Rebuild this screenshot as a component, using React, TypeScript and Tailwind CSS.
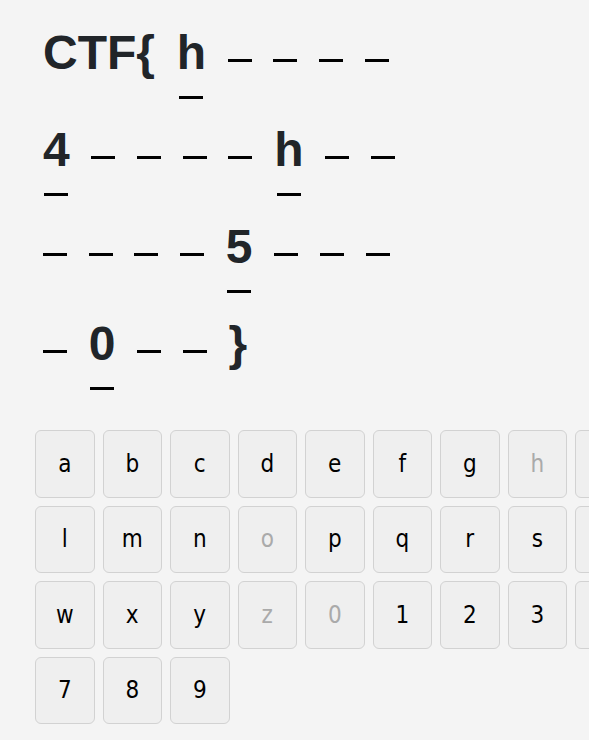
import React from "react";

type Slot = { t: "text"; v: string } | { t: "rev"; v: string } | { t: "blank" };

const T = (v: string): Slot => ({ t: "text", v });
const R = (v: string): Slot => ({ t: "rev", v });
const B: Slot = { t: "blank" };

const lines: Slot[][] = [
  [T("CTF{"), R("h"), B, B, B, B],
  [R("4"), B, B, B, B, R("h"), B, B],
  [B, B, B, B, R("5"), B, B, B],
  [B, R("0"), B, B, T("}")],
];

const keys = "abcdefghijklmnopqrstuvwxyz0123456789".split("");
const used = new Set(["h", "o", "z", "0", "4", "5"]);

function SlotView({ s }: { s: Slot }) {
  if (s.t === "blank") {
    return (
      <div className="w-[24px] shrink-0">
        <div className="mt-[34px] h-[3px] w-[24px] bg-black" />
      </div>
    );
  }
  if (s.t === "text") {
    return (
      <div className="shrink-0 text-[48px] leading-[56px] font-bold text-[#212529]">{s.v}</div>
    );
  }
  return (
    <div className="flex shrink-0 flex-col items-center">
      <div className="text-[48px] leading-[56px] font-bold text-[#212529]">{s.v}</div>
      <div className="mt-[14.5px] h-[3px] w-[24px] bg-black" />
    </div>
  );
}

export default function App() {
  return (
    <div
      className="min-h-screen w-full overflow-hidden bg-[#f4f4f4]"
      style={{ fontFamily: '"Liberation Sans", Arial, sans-serif' }}
    >
      <div className="pl-[43px] pt-[25px]">
        {lines.map((line, i) => (
          <div key={i} className="flex h-[97px] items-start gap-[21.7px]">
            {line.map((s, j) => (
              <SlotView key={j} s={s} />
            ))}
          </div>
        ))}
      </div>
      <div className="mt-[17px] pl-[35px]">
        <div className="grid w-max grid-cols-[repeat(11,59.5px)] gap-x-[8px] gap-y-[8px]">
          {keys.map((k) => {
            const dis = used.has(k);
            return (
              <button
                key={k}
                disabled={dis}
                className={`flex h-[67.5px] w-[59.5px] items-center justify-center rounded-[6px] border border-[#d2d2d2] bg-[#efefef] text-[24px] font-stretch-condensed ${
                  dis ? "text-[#aaaaaa]" : "text-black"
                }`}
                style={{ fontFamily: '"DejaVu Sans", sans-serif' }}
              >
                {k}
              </button>
            );
          })}
        </div>
      </div>
    </div>
  );
}
